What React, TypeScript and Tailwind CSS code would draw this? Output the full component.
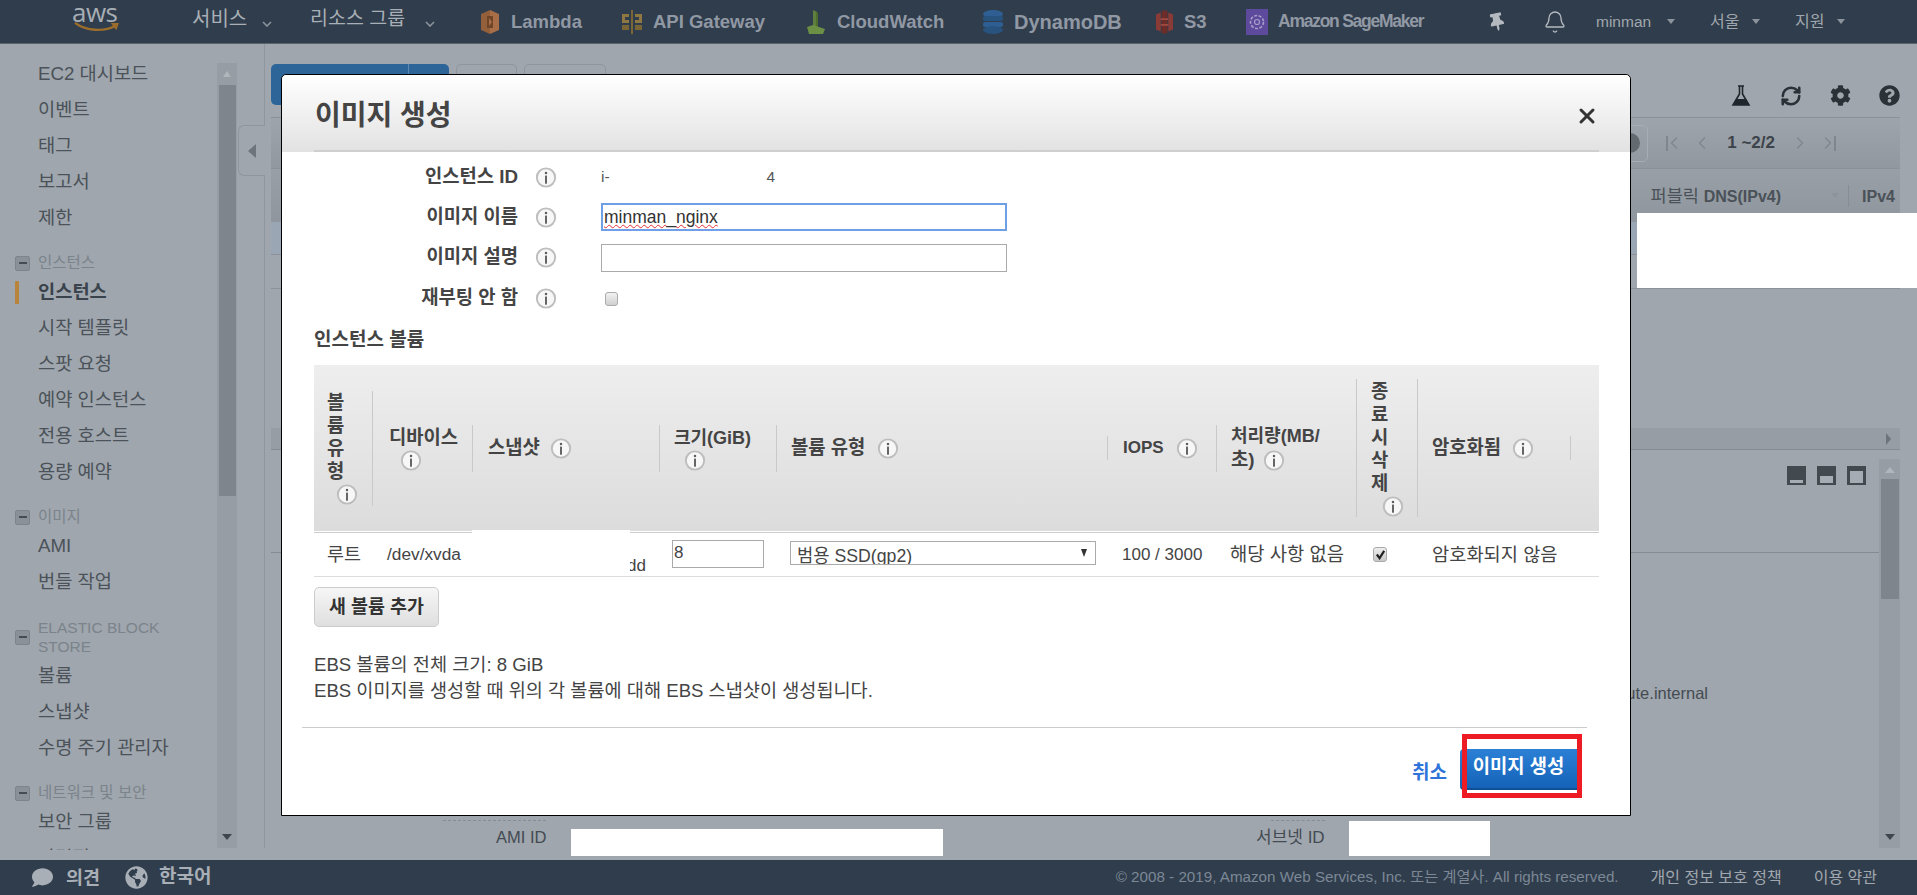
import React from "react";
import { FaCog, FaQuestionCircle, FaThumbtack, FaGlobeAmericas, FaComment } from "react-icons/fa";
import { RefreshCw, Bell, ChevronLeft, ChevronRight, X } from "lucide-react";

function Info({ className = "" }: { className?: string }) {
  return (
    <svg viewBox="0 0 22 22" className={"w-[22px] h-[21px] shrink-0 " + className}>
      <circle cx="11" cy="11" r="9.6" fill="#f7f7f7" stroke="#bdbdbd" strokeWidth="2" />
      <circle cx="11" cy="6.3" r="1.3" fill="#5f5f5f" />
      <rect x="10" y="9" width="2" height="8.5" fill="#5f5f5f" />
    </svg>
  );
}

function Caret({ className = "" }: { className?: string }) {
  return <span className={"inline-block w-0 h-0 border-x-[4px] border-x-transparent border-t-[5px] border-t-[#8b939c] " + className} />;
}

function Chev({ className = "" }: { className?: string }) {
  return (
    <svg viewBox="0 0 10 6" className={"w-[10px] h-[6px] mt-[11px] " + className}>
      <path d="M1 1l4 4 4-4" fill="none" stroke="#8b939c" strokeWidth="1.6" />
    </svg>
  );
}

function Svc({ w, icon, label, text = "text-[18.5px]" }: { w: string; icon: React.ReactNode; label: string; text?: string }) {
  return (
    <div className={"flex items-center gap-[10px] shrink-0 " + w}>
      {icon}
      <span className={"font-bold text-[#9098a4] whitespace-nowrap " + text}>{label}</span>
    </div>
  );
}

const LambdaIcon = (
  <svg viewBox="0 0 22 26" className="w-[22px] h-[26px]">
    <path d="M2 5l9-4v24l-9-4z" fill="#94603c" />
    <path d="M20 5l-9-4v24l9-4z" fill="#a86e48" />
    <path d="M8 7h6v12H8z" fill="#6f4527" />
    <path d="M10 9l3 4-3 4z" fill="#a86e48" />
  </svg>
);
const ApiIcon = (
  <svg viewBox="0 0 22 26" className="w-[22px] h-[26px]">
    <path d="M10 1h2v24h-2z" fill="#7a6535" />
    <path d="M1 5h7v3H4v3h4v3H1zM21 5h-7v3h4v3h-4v3h7z" fill="#8e7740" />
    <path d="M1 16h7v5H1zM14 16h7v5h-7z" fill="#7a6535" />
  </svg>
);
const CwIcon = (
  <svg viewBox="0 0 22 26" className="w-[22px] h-[26px]">
    <path d="M8 1l4 2v15H8z" fill="#5f7f3c" />
    <path d="M12 3l-1 1v14h2V4z" fill="#4f6c30" />
    <path d="M2 18l6-2 6 2 6 2-2 5H4z" fill="#6b8f44" />
  </svg>
);
const DynIcon = (
  <svg viewBox="0 0 22 26" className="w-[22px] h-[26px]">
    <ellipse cx="11" cy="5" rx="10" ry="4" fill="#2f5f92" />
    <rect x="1" y="7" width="20" height="5" rx="2" fill="#29537f" />
    <rect x="1" y="13" width="20" height="5" rx="2" fill="#2f5f92" />
    <ellipse cx="11" cy="21" rx="10" ry="4" fill="#29537f" />
  </svg>
);
const S3Icon = (
  <svg viewBox="0 0 20 26" className="w-[19px] h-[26px]">
    <path d="M1 5l5-2v20l-5-2zM19 5l-5-2v20l5-2z" fill="#8a3b36" />
    <path d="M7 1h6v24H7z" fill="#6e2c28" />
    <path d="M6 9h8v2H6zM6 15h8v2H6z" fill="#a04a44" />
  </svg>
);
const SageIcon = (
  <svg viewBox="0 0 22 26" className="w-[22px] h-[26px]">
    <rect width="22" height="26" fill="#5d4a9c" />
    <circle cx="11" cy="13" r="6.5" fill="none" stroke="#a79fcb" strokeWidth="1.6" strokeDasharray="3 1.5" />
    <circle cx="11" cy="13" r="2.5" fill="none" stroke="#a79fcb" strokeWidth="1.2" />
  </svg>
);

function Header() {
  return (
    <header className="h-[44px] shrink-0 bg-[#303d4c] border-b border-[#59646f] flex items-center pl-[72px] text-[#a8afb6]">
      <div className="w-[120px] shrink-0 flex flex-col items-start -mt-[8px] relative">
        <span className="text-[26px] leading-[20px] text-[#a7aeb5] tracking-[-0.5px] font-['Open_Sans',sans-serif]">aws</span>
        <svg viewBox="0 0 50 12" className="w-[50px] h-[11px]">
          <path d="M1 1c12 9 32 10 44 3" fill="none" stroke="#9c6d2b" strokeWidth="2.6" />
          <path d="M40 1l9 0-3 8z" fill="#9c6d2b" />
        </svg>
      </div>
      <div className="w-[118px] shrink-0 flex items-center text-[20px] -mt-[6px]">서비스<Chev className="ml-[15px]" /></div>
      <div className="w-[169px] shrink-0 flex items-center text-[19.5px] -mt-[6px]">리소스 그룹<Chev className="ml-[20px]" /></div>
      <Svc w="w-[142px]" icon={LambdaIcon} label="Lambda" />
      <Svc w="w-[184px]" icon={ApiIcon} label="API Gateway" />
      <Svc w="w-[177px]" icon={CwIcon} label="CloudWatch" />
      <Svc w="w-[173px]" icon={DynIcon} label="DynamoDB" text="text-[20px]" />
      <Svc w="w-[91px]" icon={S3Icon} label="S3" />
      <Svc w="w-[240px]" icon={SageIcon} label="Amazon SageMaker" text="text-[17.5px] tracking-[-1.25px]" />
      <div className="w-[57px] shrink-0 pl-[2px]"><FaThumbtack className="text-[#b3b9bf] text-[18px] -rotate-12" /></div>
      <div className="w-[53px] shrink-0"><Bell size={24} strokeWidth={1.3} className="text-[#b3b9bf]" /></div>
      <div className="w-[114px] shrink-0 flex items-center gap-[16px] text-[15.5px] text-[#a0a7ae]">minman<Caret /></div>
      <div className="w-[85px] shrink-0 flex items-center gap-[13px] text-[16px] text-[#a0a7ae]">서울<Caret /></div>
      <div className="flex items-center gap-[13px] text-[16px] text-[#a0a7ae]">지원<Caret /></div>
    </header>
  );
}

function NavRow({ label, active }: { label: string; active?: boolean }) {
  return (
    <div className={"h-[36px] flex items-center shrink-0 relative pl-[38px] text-[18.7px] whitespace-nowrap " + (active ? "font-bold text-[#3a434c]" : "text-[#4b5259]")}>
      {active && <span className="absolute left-[15px] top-[7px] w-[4px] h-[23px] bg-[#b8833a] rounded-[1px]" />}
      {label}
    </div>
  );
}

function NavGroup({ label, tall }: { label: string; tall?: boolean }) {
  return (
    <div className="mt-[18px] mb-[2px] shrink-0 flex items-center pl-[15px]">
      <span className="w-[15px] h-[15px] rounded-[2px] bg-[#8a9198] border border-[#7d848b] flex items-center justify-center shrink-0">
        <span className="w-[8px] h-[2px] bg-[#454c54]" />
      </span>
      <span className={"ml-[8px] text-[15.5px] text-[#7b838b] " + (tall ? "leading-[19px] w-[135px]" : "leading-[18px] whitespace-nowrap")}>{label}</span>
    </div>
  );
}

function Sidebar() {
  return (
    <aside className="w-[238px] shrink-0 flex h-[806px]">
      <div className="w-[217px] h-full pt-[12px] overflow-hidden flex flex-col">
        <NavRow label="EC2 대시보드" />
        <NavRow label="이벤트" />
        <NavRow label="태그" />
        <NavRow label="보고서" />
        <NavRow label="제한" />
        <NavGroup label="인스턴스" />
        <NavRow label="인스턴스" active />
        <NavRow label="시작 템플릿" />
        <NavRow label="스팟 요청" />
        <NavRow label="예약 인스턴스" />
        <NavRow label="전용 호스트" />
        <NavRow label="용량 예약" />
        <NavGroup label="이미지" />
        <NavRow label="AMI" />
        <NavRow label="번들 작업" />
        <NavGroup label="ELASTIC BLOCK STORE" tall />
        <NavRow label="볼륨" />
        <NavRow label="스냅샷" />
        <NavRow label="수명 주기 관리자" />
        <NavGroup label="네트워크 및 보안" />
        <NavRow label="보안 그룹" />
        <NavRow label="탄력적 IP" />
      </div>
      <div className="w-[20px] h-[785px] mt-[19px] bg-[#969da4] flex flex-col items-center relative">
        <span className="mt-[8px] w-0 h-0 border-x-[4px] border-x-transparent border-b-[6px] border-b-[#b0b6bc]" />
        <div className="w-[17px] h-[411px] bg-[#7e858c] mt-[8px]" />
        <span className="mt-auto mb-[8px] w-0 h-0 border-x-[5px] border-x-transparent border-t-[6px] border-t-[#3f464d]" />
      </div>
    </aside>
  );
}

function Collapse() {
  return (
    <div className="w-[27px] shrink-0 h-[804px] flex flex-col">
      <div className="h-[81px] border-r border-[#8f969d]" />
      <div className="h-[51px] w-[27px] border border-r-0 border-[#8f969d] rounded-l-[6px] bg-[#9fa6ad] flex items-center justify-center">
        <span className="w-0 h-0 border-y-[7px] border-y-transparent border-r-[8px] border-r-[#6d747b]" />
      </div>
      <div className="flex-1 border-r border-[#8f969d]" />
    </div>
  );
}

function Main() {
  return (
    <main className="flex-1 min-w-0 pl-[6px] pr-[17px] flex flex-col h-[804px]">
      {/* toolbar */}
      <div className="h-[74px] shrink-0 border-b border-[#8a9198] pt-[20px] flex justify-between">
        <div className="flex gap-[7px]">
          <div className="w-[178px] h-[41px] rounded-[5px] bg-[#2d6599] flex justify-end">
            <span className="w-[41px] border-l border-[#5c89b3]" />
          </div>
          <div className="w-[61px] h-[41px] rounded-[5px] border border-[#8f969d]" />
          <div className="w-[82px] h-[41px] rounded-[5px] border border-[#8f969d]" />
        </div>
        <div className="flex items-start gap-[28px] pt-[21px]">
          <svg viewBox="0 0 20 22" className="w-[22px] h-[22px]">
            <path d="M7 1h6M8.5 1v8L2 20h16L11.5 9V1" fill="none" stroke="#1f262c" strokeWidth="1.6" />
            <path d="M5 14h10l3 6H2z" fill="#1f262c" />
          </svg>
          <RefreshCw size={22} strokeWidth={2.8} className="text-[#2a3137]" />
          <FaCog size={21} className="text-[#2a3137]" />
          <FaQuestionCircle size={21} className="text-[#2a3137]" />
        </div>
      </div>
      {/* pagination */}
      <div className="h-[51px] shrink-0 border-b border-[#8a9198] bg-gradient-to-b from-[#9da4ab] to-[#91989f] flex items-center justify-end pr-[64px] gap-[15px]">
        <div className="w-[40px] h-[37px] rounded-r-[5px] border border-[#a6adb4] flex items-center justify-end pr-[7px] mr-[3px]">
          <span className="w-[20px] h-[20px] rounded-full bg-[#636a70]" />
        </div>
        <div className="flex items-center text-[#7f868d]">
          <span className="w-[2px] h-[15px] bg-[#7f868d] mr-[-4px]" />
          <ChevronLeft size={20} strokeWidth={1.5} />
          <ChevronLeft size={20} strokeWidth={1.5} className="ml-[8px]" />
        </div>
        <span className="text-[17px] font-bold text-[#3c434a] whitespace-nowrap">1 ~2/2</span>
        <div className="flex items-center text-[#7f868d]">
          <ChevronRight size={20} strokeWidth={1.5} className="mr-[8px]" />
          <ChevronRight size={20} strokeWidth={1.5} />
          <span className="w-[2px] h-[15px] bg-[#7f868d] ml-[-4px]" />
        </div>
      </div>
      {/* grid head */}
      <div className="h-[53px] shrink-0 bg-gradient-to-b from-[#989fa6] to-[#8f969d] flex items-start pt-[16px] justify-end pr-[5px] text-[16px] font-bold text-[#4a5158]">
        <span className="whitespace-nowrap font-normal text-[17.5px] leading-[22px]">퍼블릭 <b className="text-[16px]">DNS(IPv4)</b></span>
        <Caret className="ml-[50px] mt-[8px]" />
        <span className="w-px h-[22px] bg-[#868d94] ml-[9px] mr-[13px]" />
        <span>IPv4</span>
      </div>
      <div className="h-[33px] shrink-0 bg-[#9aa6b3] border-b border-[#8a9198]" />
      <div className="h-[34px] shrink-0 border-b border-[#8a9198]" />
      <div className="h-[139px] shrink-0" />
      {/* horizontal scroll */}
      <div className="h-[22px] shrink-0 bg-[#969da4] border-b border-[#848b92] flex items-center justify-end pr-[9px]">
        <span className="w-0 h-0 border-y-[6px] border-y-transparent border-l-[5px] border-l-[#6d747b]" />
      </div>
      {/* detail panel */}
      <div className="flex-1 flex min-h-0">
        <div className="flex-1 min-w-0 flex flex-col">
          <div className="h-[103px] shrink-0 border-b border-[#848b92] flex justify-end pt-[16px] pr-[13px] gap-[11px]">
            <span className="w-[19px] h-[19px] bg-[#42494f] flex items-end justify-center pb-[2px]"><span className="w-[13px] h-[3px] bg-[#a5acb3]" /></span>
            <span className="w-[19px] h-[19px] bg-[#42494f] flex items-end justify-center pb-[2px]"><span className="w-[13px] h-[7px] bg-[#a5acb3]" /></span>
            <span className="w-[19px] h-[19px] bg-[#42494f] flex items-end justify-center pb-[2px]"><span className="w-[13px] h-[12px] bg-[#a5acb3]" /></span>
          </div>
          <div className="flex justify-end pr-[171px] mt-[128px] text-[16.5px] text-[#444b52]">ute.internal</div>
        </div>
        <div className="w-[21px] shrink-0 mt-[9px] bg-[#969da4] flex flex-col items-center">
          <span className="mt-[8px] w-0 h-0 border-x-[5px] border-x-transparent border-b-[6px] border-b-[#b0b6bc]" />
          <div className="w-[18px] h-[120px] bg-[#7e858c] mt-[6px]" />
          <span className="mt-auto mb-[8px] w-0 h-0 border-x-[5px] border-x-transparent border-t-[6px] border-t-[#3f464d]" />
        </div>
      </div>
    </main>
  );
}

function FormRow({ label, h, children }: { label: string; h: string; children: React.ReactNode }) {
  return (
    <div className={"flex items-center " + h}>
      <div className="w-[204px] text-right text-[18.8px] font-bold text-[#444] whitespace-nowrap">{label}</div>
      <Info className="ml-[17px]" />
      <div className="ml-[44px]">{children}</div>
    </div>
  );
}

function Th({ w, sep, pad, children }: { w: string; sep?: string; pad: string; children: React.ReactNode }) {
  return (
    <div className={"shrink-0 flex items-center " + w}>
      <div className={"w-full flex flex-col justify-center " + pad + " " + (sep ? sep + " border-r border-r-[#c9c9c9]" : "")}>{children}</div>
    </div>
  );
}

function Modal() {
  return (
    <div className="absolute left-[281px] top-[74px] w-[1350px] h-[742px] bg-white border border-black rounded-t-[5px] flex flex-col text-[#444] overflow-visible">
      <div className="h-[77px] shrink-0 bg-gradient-to-b from-white to-[#e2e2e2] rounded-t-[5px] flex flex-col">
        <div className="flex-1 flex items-center justify-between pl-[33px] pr-[31px] pt-[6px]">
          <h2 className="text-[28px] font-bold text-[#444] whitespace-nowrap">이미지 생성</h2>
          <X size={24} strokeWidth={3} className="text-[#333]" />
        </div>
        <div className="h-[2px] bg-[#cfcfcf] ml-[32px] mr-[31px]" />
      </div>
      <div className="pl-[32px] pr-[31px] flex-1 flex flex-col">
        <div className="mt-[5px]">
          <FormRow label="인스턴스 ID" h="h-[40px]">
            <div className="w-[174px] flex justify-between text-[15.5px] text-[#555]"><span>i-</span><span>4</span></div>
          </FormRow>
          <FormRow label="이미지 이름" h="h-[40px]">
            <div className="w-[406px] h-[28px] border-2 border-[#6f9fe6] pl-[1px] text-[17.5px] leading-[24px] text-[#333] whitespace-nowrap">
              <span className="underline decoration-wavy decoration-[#e53030] decoration-1">minman</span>_<span className="underline decoration-wavy decoration-[#e53030] decoration-1">nginx</span>
            </div>
          </FormRow>
          <FormRow label="이미지 설명" h="h-[41px]">
            <div className="w-[406px] h-[28px] border border-[#aaa]" />
          </FormRow>
          <FormRow label="재부팅 안 함" h="h-[41px]">
            <span className="block ml-[4px] w-[13px] h-[14px] rounded-[3px] border border-[#aaa] bg-gradient-to-b from-[#f2f2f2] to-[#d0d0d0]" />
          </FormRow>
        </div>
        <div className="mt-[10px] h-[22px] text-[19px] leading-[22px] font-bold text-[#444]">인스턴스 볼륨</div>
        <div className="mt-[14px] w-[1285px]">
          <div className="h-[166px] bg-gradient-to-b from-[#eeeeee] to-[#dcdcdc] flex text-[18.8px] font-bold text-[#444] leading-[24px]">
            <Th w="w-[59px]" sep="h-[115px]" pad="pl-[13px]">
              <span className="w-[20px] break-all leading-[23px]">볼륨유형</span>
              <Info className="ml-[9px] mt-[1px]" />
            </Th>
            <Th w="w-[100px]" sep="h-[47px]" pad="pl-[16px]">
              <span className="whitespace-nowrap">디바이스</span>
              <Info className="ml-[11px]" />
            </Th>
            <Th w="w-[187px]" sep="h-[47px]" pad="pl-[15px]">
              <div className="flex items-center gap-[10px] whitespace-nowrap">스냅샷<Info /></div>
            </Th>
            <Th w="w-[117px]" sep="h-[47px]" pad="pl-[14px]">
              <span className="whitespace-nowrap text-[18px]">크기(GiB)</span>
              <Info className="ml-[10px]" />
            </Th>
            <Th w="w-[331px]" sep="h-[24px]" pad="pl-[14px]">
              <div className="flex items-center gap-[12px] whitespace-nowrap">볼륨 유형<Info /></div>
            </Th>
            <Th w="w-[109px]" sep="h-[47px]" pad="pl-[15px]">
              <div className="flex items-center gap-[12px] text-[17px]">IOPS<Info /></div>
            </Th>
            <Th w="w-[140px]" sep="h-[138px]" pad="pl-[14px]">
              <span className="whitespace-nowrap text-[18px]">처리량(MB/</span>
              <div className="flex items-center gap-[8px]">초)<Info /></div>
            </Th>
            <Th w="w-[61px]" sep="h-[138px]" pad="pl-[14px]">
              <span className="w-[20px] break-all leading-[23px]">종료시삭제</span>
              <Info className="ml-[11px] mt-[1px]" />
            </Th>
            <Th w="w-[153px]" sep="h-[24px]" pad="pl-[14px]">
              <div className="flex items-center gap-[11px] whitespace-nowrap">암호화됨<Info /></div>
            </Th>
            <Th w="w-[28px]" pad=""> </Th>
          </div>
          <div className="h-px bg-white" />
          <div className="h-px bg-[#ccc]" />
          <div className="h-[44px] border-b border-[#ddd] flex text-[17px] text-[#444] whitespace-nowrap">
            <div className="w-[59px] pl-[13px] pt-[8px] text-[18.5px]">루트</div>
            <div className="w-[100px] pl-[14px] pt-[9px] text-[17.3px]">/dev/xvda</div>
            <div className="w-[187px] flex justify-end pr-[14px] pt-[20px]">dd</div>
            <div className="w-[117px] pl-[12px] pt-[7px]">
              <div className="w-[92px] h-[28px] border border-[#aaa] pl-[1px] text-[17px] leading-[24px]">8</div>
            </div>
            <div className="w-[331px] pl-[13px] pt-[8px]">
              <div className="w-[306px] h-[24px] border border-[#aaa] pl-[6px] text-[17.7px] leading-[28px] overflow-hidden flex justify-between">
                <span>범용 SSD(gp2)</span>
                <span className="w-0 h-0 border-x-[3.5px] border-x-transparent border-t-[8px] border-t-[#333] mt-[7px] mr-[8px]" />
              </div>
            </div>
            <div className="w-[109px] pl-[14px] pt-[9px]">100 / 3000</div>
            <div className="w-[140px] pl-[13px] pt-[8px] text-[18.8px]">해당 사항 없음</div>
            <div className="w-[61px] pl-[16px] pt-[14px]">
              <span className="flex w-[14px] h-[15px] rounded-[3px] border border-[#aaa] bg-gradient-to-b from-[#eeeeee] to-[#c8c8c8] items-center justify-center">
                <svg viewBox="0 0 12 12" className="w-[11px] h-[11px]"><path d="M2 6l3 4 5-8" fill="none" stroke="#222" strokeWidth="2.4" /></svg>
              </span>
            </div>
            <div className="w-[153px] pl-[14px] pt-[8px] text-[18.7px]">암호화되지 않음</div>
          </div>
        </div>
        <button className="mt-[10px] w-[125px] h-[40px] rounded-[5px] border border-[#ccc] bg-gradient-to-b from-[#f6f6f6] to-[#dfdfdf] text-[18.4px] font-bold text-[#333] font-['Liberation_Sans','Noto_Sans_CJK_KR',sans-serif]">새 볼륨 추가</button>
        <div className="mt-[25px] text-[18.6px] leading-[26px] text-[#444] whitespace-nowrap">
          <p>EBS 볼륨의 전체 크기: 8 GiB</p>
          <p>EBS 이미지를 생성할 때 위의 각 볼륨에 대해 EBS 스냅샷이 생성됩니다.</p>
        </div>
        <div className="mt-[23px] h-px bg-[#ccc] -ml-[12px] w-[1285px]" />
        <div className="mt-[21px] flex justify-end items-center pr-[22px] gap-[13px]">
          <span className="text-[19px] font-bold text-[#2e73d9] pt-[7px]">취소</span>
          <div className="relative">
            <button className="w-[117px] h-[41px] rounded-l-[4px] bg-gradient-to-b from-[#2b80d6] to-[#1463b8] border-b-2 border-[#0f4f96] text-[18.8px] font-bold text-white font-['Liberation_Sans','Noto_Sans_CJK_KR',sans-serif] pb-[2px]">이미지 생성</button>
            <span className="absolute left-[2px] -top-[15px] w-[120px] h-[64px] border-[5px] border-[#ed1c24]" />
          </div>
        </div>
      </div>
    </div>
  );
}

function Footer() {
  return (
    <footer className="h-[35px] shrink-0 mt-auto bg-[#303d4c] flex items-center pl-[32px] pr-[40px] text-[15.2px] text-[#7c8896]">
      <FaComment size={21} className="text-[#a8afb6]" />
      <span className="ml-[13px] text-[18.5px] font-bold text-[#a8afb6]">의견</span>
      <FaGlobeAmericas size={23} className="ml-[25px] text-[#a8afb6]" />
      <span className="ml-[11px] text-[19px] font-bold text-[#a8afb6]">한국어</span>
      <span className="ml-auto whitespace-nowrap">© 2008 - 2019, Amazon Web Services, Inc. 또는 계열사. All rights reserved.</span>
      <span className="ml-[32px] whitespace-nowrap text-[16px] text-[#a0a7ae]">개인 정보 보호 정책</span>
      <span className="ml-[32px] whitespace-nowrap text-[16px] text-[#a0a7ae]">이용 약관</span>
    </footer>
  );
}

export default function App() {
  return (
    <div className="relative w-full h-[895px] overflow-hidden flex flex-col bg-[#9fa6ad] font-['Liberation_Sans','Noto_Sans_CJK_KR',sans-serif]">
      <Header />
      <div className="flex flex-1 min-h-0">
        <Sidebar />
        <Collapse />
        <Main />
      </div>
      <Footer />

      {/* blanked-out areas laid over the page */}
      <div className="absolute left-[1637px] top-[213px] w-[280px] h-[75px] bg-white" />
      <div className="absolute left-[443px] top-[820px] w-[103px] border-t border-dashed border-[#868d94]" />
      <div className="absolute left-[496px] top-[825px] text-[16.5px] text-[#444b52]">AMI ID</div>
      <div className="absolute left-[571px] top-[829px] w-[372px] h-[27px] bg-white" />
      <div className="absolute left-[1271px] top-[820px] w-[54px] border-t border-dashed border-[#868d94]" />
      <div className="absolute left-[1256px] top-[825px] text-[17px] text-[#444b52]">서브넷 ID</div>
      <div className="absolute left-[1349px] top-[821px] w-[141px] h-[35px] bg-white" />

      <Modal />
      <div className="absolute left-[472px] top-[530px] w-[158px] h-[46px] bg-white" />
    </div>
  );
}
